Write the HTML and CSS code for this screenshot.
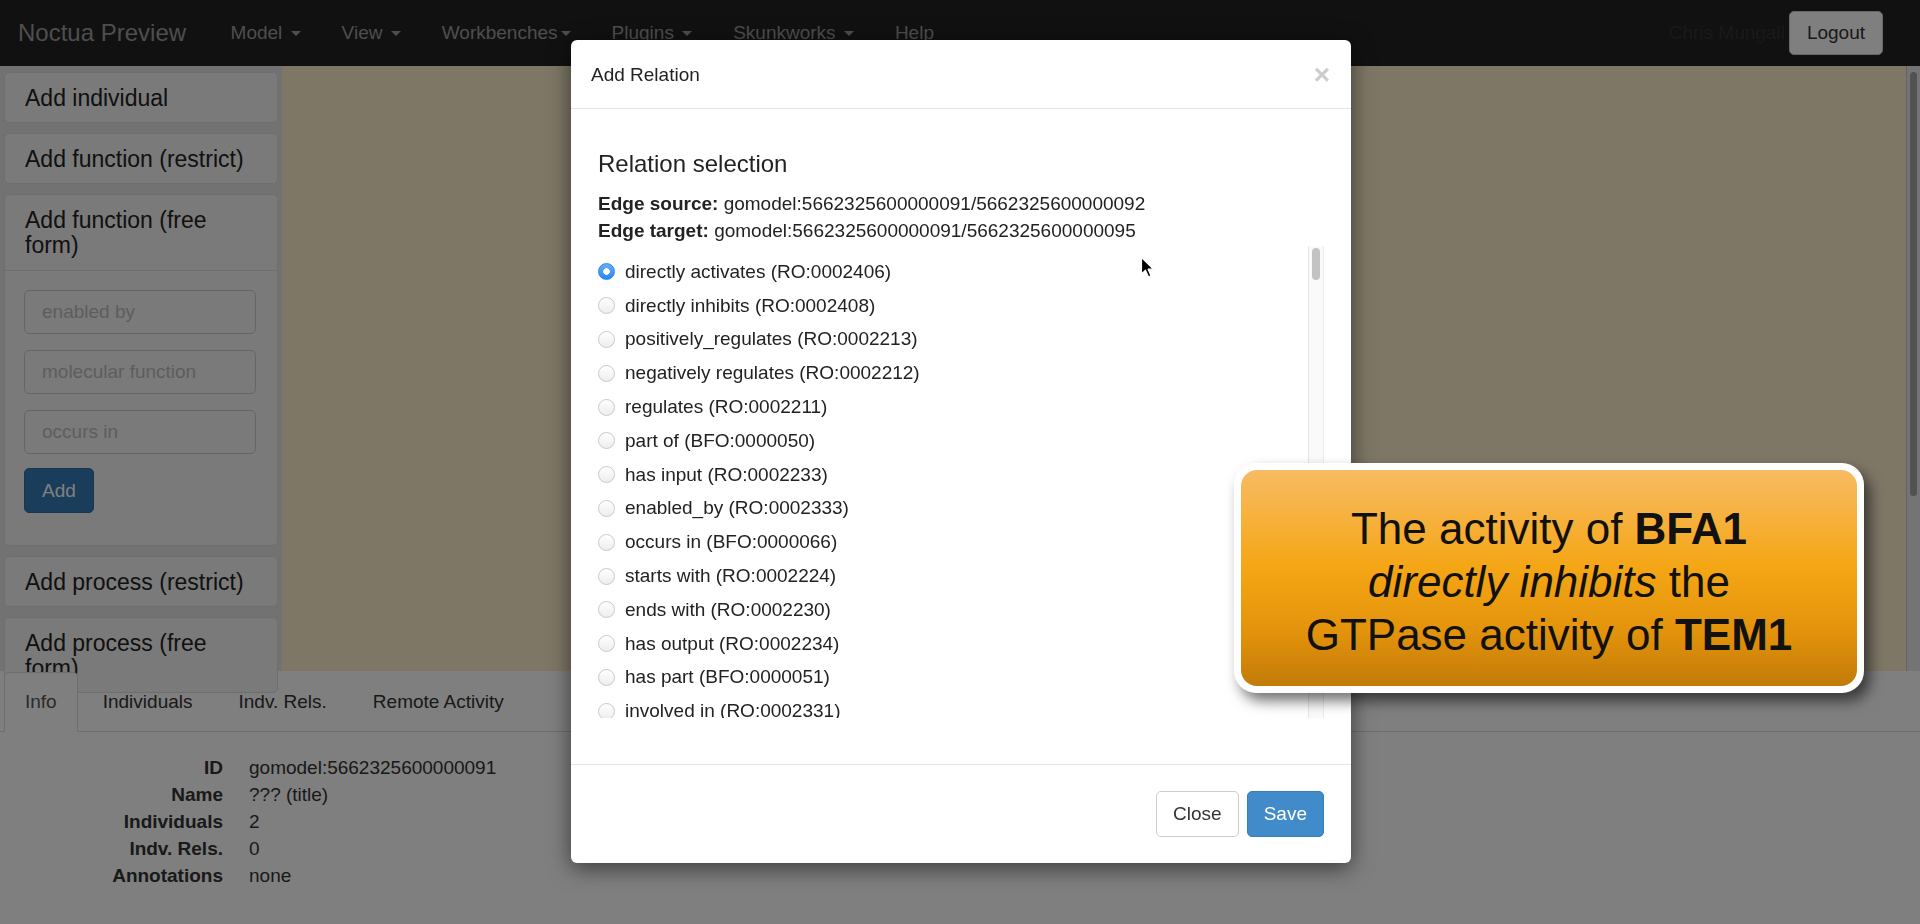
FILE: index.html
```html
<!DOCTYPE html>
<html lang="en">
    <head>
        <meta charset="UTF-8">
        <meta name="viewport" content="width=device-width, initial-scale=1.0">
        <title>Noctua Preview</title>
        <link rel="stylesheet" href="styles.css">
    </head>
    <body>
        <nav class="navbar">
            <span class="brand">Noctua Preview</span>
            <ul class="nav-links">
                <li>Model <span class="caret"></span></li>
                <li>View <span class="caret"></span></li>
                <li>Workbenches<span class="caret"></span></li>
                <li>Plugins <span class="caret"></span></li>
                <li>Skunkworks <span class="caret"></span></li>
                <li>Help</li>
            </ul>
            <div class="nav-right">
                <span class="user">Chris Mungall</span>
                <button class="btn-logout">Logout</button>
            </div>
        </nav>

        <div class="workspace">
            <aside class="sidebar">
                <div class="panel"><div class="panel-heading">Add individual</div></div>
                <div class="panel"><div class="panel-heading">Add function (restrict)</div></div>
                <div class="panel">
                    <div class="panel-heading open">Add function (free form)</div>
                    <div class="panel-body">
                        <input class="field" type="text" placeholder="enabled by">
                        <input class="field" type="text" placeholder="molecular function">
                        <input class="field" type="text" placeholder="occurs in">
                        <button class="btn-add">Add</button>
                    </div>
                </div>
                <div class="panel"><div class="panel-heading">Add process (restrict)</div></div>
                <div class="panel"><div class="panel-heading">Add process (free form)</div></div>
            </aside>
            <div class="canvas"></div>
            <div class="page-scroll"><div class="page-thumb"></div></div>
        </div>

        <div class="bottom">
            <ul class="tabs">
                <li class="tab active">Info</li>
                <li class="tab">Individuals</li>
                <li class="tab">Indv. Rels.</li>
                <li class="tab">Remote Activity</li>
            </ul>
            <dl class="info">
                <dt>ID</dt><dd>gomodel:5662325600000091</dd>
                <dt>Name</dt><dd>??? (title)</dd>
                <dt>Individuals</dt><dd>2</dd>
                <dt>Indv. Rels.</dt><dd>0</dd>
                <dt>Annotations</dt><dd>none</dd>
            </dl>
        </div>

        <div class="backdrop"></div>

        <div class="modal">
            <div class="modal-header">
                <span class="modal-title">Add Relation</span>
                <span class="close">&times;</span>
            </div>
            <div class="modal-body">
                <h4 class="section-title">Relation selection</h4>
                <div class="edge"><b>Edge source:</b> gomodel:5662325600000091/5662325600000092</div>
                <div class="edge"><b>Edge target:</b> gomodel:5662325600000091/5662325600000095</div>
                <div class="rel-box">
                    <div class="rel-list">
                        <label class="rel"><input type="radio" name="rel" checked> directly activates (RO:0002406)</label>
                        <label class="rel"><input type="radio" name="rel"> directly inhibits (RO:0002408)</label>
                        <label class="rel"><input type="radio" name="rel"> positively_regulates (RO:0002213)</label>
                        <label class="rel"><input type="radio" name="rel"> negatively regulates (RO:0002212)</label>
                        <label class="rel"><input type="radio" name="rel"> regulates (RO:0002211)</label>
                        <label class="rel"><input type="radio" name="rel"> part of (BFO:0000050)</label>
                        <label class="rel"><input type="radio" name="rel"> has input (RO:0002233)</label>
                        <label class="rel"><input type="radio" name="rel"> enabled_by (RO:0002333)</label>
                        <label class="rel"><input type="radio" name="rel"> occurs in (BFO:0000066)</label>
                        <label class="rel"><input type="radio" name="rel"> starts with (RO:0002224)</label>
                        <label class="rel"><input type="radio" name="rel"> ends with (RO:0002230)</label>
                        <label class="rel"><input type="radio" name="rel"> has output (RO:0002234)</label>
                        <label class="rel"><input type="radio" name="rel"> has part (BFO:0000051)</label>
                        <label class="rel"><input type="radio" name="rel"> involved in (RO:0002331)</label>
                        <label class="rel"><input type="radio" name="rel"> acts upstream of (RO:0002263)</label>
                    </div>
                    <div class="rel-scroll"><div class="rel-thumb"></div></div>
                </div>
            </div>
            <div class="modal-footer">
                <button class="btn btn-close">Close</button>
                <button class="btn btn-save">Save</button>
            </div>
        </div>

        <div class="callout">
            <div class="callout-inner">
                <p class="callout-text">
                    The activity of <b>BFA1</b><br>
                    <i>directly inhibits</i> the<br>
                    GTPase activity of <b>TEM1</b>
                </p>
            </div>
        </div>

        <svg class="cursor" width="16" height="24" viewBox="0 0 16 24">
            <path d="M1.5 1.5 L1.5 18 L5.5 14.2 L8.4 20.8 L11 19.7 L8.1 13.2 L13.5 13.2 Z" fill="#000" stroke="#fff" stroke-width="1.2" stroke-linejoin="round"/>
        </svg>
    </body>
</html>
```

FILE: styles.css
```css
*{
    margin: 0;
    padding: 0;
    box-sizing: border-box;
}
body{
    width: 1920px;
    height: 924px;
    overflow: hidden;
    background-color: white;
    font-family: "Liberation Sans", Arial, Helvetica, sans-serif;
    font-size: 19px;
    color: #333;
}
ul{
    list-style: none;
}

/* top bar */
.navbar{
    height: 66px;
    background-color: #222;
    display: flex;
    align-items: center;
    padding: 0 37px 0 18px;
}
.brand{
    font-size: 24px;
    color: #9d9d9d;
    padding-right: 24px;
}
.nav-links{
    display: flex;
}
.nav-links li{
    padding: 0 20.5px;
    color: #9d9d9d;
}
.caret{
    display: inline-block;
    width: 0;
    height: 0;
    margin-left: 3px;
    vertical-align: middle;
    border-top: 5px solid #9d9d9d;
    border-left: 5px solid transparent;
    border-right: 5px solid transparent;
}
.nav-right{
    margin-left: auto;
    display: flex;
    align-items: center;
    gap: 4px;
}
.user{
    color: #333;
}
.btn-logout{
    height: 44px;
    padding: 0 17px;
    font-family: inherit;
    font-size: 19px;
    color: #333;
    background-color: #fff;
    border: 1px solid #ccc;
    border-radius: 5px;
}

/* workspace */
.workspace{
    height: 605px;
    display: flex;
}
.sidebar{
    position: relative;
    z-index: 1;
    width: 282px;
    flex-shrink: 0;
    background-color: #e4e4e4;
    padding-top: 6px;
}
.panel{
    margin: 0 4px 10px 4px;
    background-color: #f5f5f5;
    border: 1px solid #ddd;
    border-radius: 5px;
}
.panel-heading{
    font-size: 23px;
    line-height: 25px;
    color: #222;
    padding: 13px 20px 11px 20px;
}
.panel-heading.open{
    padding-bottom: 12px;
    border-bottom: 1px solid #ddd;
}
.panel-body{
    display: flex;
    flex-direction: column;
    align-items: flex-start;
    gap: 16px;
    padding: 19px 21px 32px 19px;
}
.field{
    width: 100%;
    height: 44px;
    padding: 0 17px;
    font-family: inherit;
    font-size: 19px;
    background-color: #f5f5f5;
    border: 1px solid #ccc;
    border-radius: 5px;
}
.field::placeholder{
    color: #bbb;
}
.btn-add{
    margin-top: -2px;
    height: 45px;
    width: 70px;
    font-family: inherit;
    font-size: 19px;
    color: white;
    background-color: #337ab7;
    border: 1px solid #2e6da4;
    border-radius: 5px;
}
.canvas{
    flex: 1;
    background-color: #fdeecc;
}
.page-scroll{
    width: 14px;
    background-color: #e8e8e8;
    border-left: 1px solid #c8c8c8;
    padding: 6px 0 0 3px;
}
.page-thumb{
    width: 7px;
    height: 424px;
    border-radius: 4px;
    background-color: #a4a4a4;
}

/* bottom info */
.bottom{
    height: 253px;
}
.tabs{
    display: flex;
    padding: 1px 0 0 4px;
    border-bottom: 1px solid #ddd;
}
.tab{
    padding: 15px 20px 16px 20px;
    line-height: 27px;
    margin-right: 4px;
    margin-bottom: -1px;
    border: 1px solid transparent;
    color: #333;
}
.tab.active{
    position: relative;
    z-index: 2;
    background-color: white;
    border-color: #ddd #ddd transparent #ddd;
    border-radius: 5px 5px 0 0;
    color: #555;
}
.info{
    display: grid;
    grid-template-columns: 223px auto;
    column-gap: 26px;
    padding-top: 22px;
    line-height: 27px;
}
.info dt{
    text-align: right;
    font-weight: bold;
}

/* modal */
.backdrop{
    position: fixed;
    inset: 0;
    z-index: 10;
    background-color: rgba(0, 0, 0, .5);
}
.modal{
    position: absolute;
    z-index: 20;
    left: 571px;
    top: 40px;
    width: 780px;
    height: 823px;
    background-color: white;
    border-radius: 6px;
    box-shadow: 0 5px 22px rgba(0, 0, 0, .55);
    display: flex;
    flex-direction: column;
}
.modal-header{
    display: flex;
    align-items: center;
    justify-content: space-between;
    padding: 21px 21px 20px 20px;
    line-height: 27px;
    border-bottom: 1px solid #e5e5e5;
}
.modal-title{
    color: #222;
}
.close{
    font-size: 28px;
    font-weight: bold;
    color: #ccc;
}
.modal-body{
    flex: 1;
    padding: 20px 27px 0 27px;
}
.section-title{
    margin-top: 22px;
    margin-bottom: 13px;
    font-size: 24px;
    font-weight: normal;
    line-height: 26px;
    color: #222;
}
.edge{
    line-height: 27px;
    color: #222;
}
.rel-box{
    margin-top: 2px;
    height: 472px;
    display: flex;
}
.rel-list{
    flex: 1;
    overflow: hidden;
    padding-top: 9px;
    color: #222;
}
.rel{
    display: flex;
    align-items: center;
    height: 33.8px;
    gap: 10px;
}
.rel input{
    appearance: none;
    width: 17px;
    height: 17px;
    border-radius: 50%;
    border: 1px solid #c9c9c9;
    background: linear-gradient(#fff, #ededed);
    flex-shrink: 0;
}
.rel input:checked{
    border-color: #2f86e8;
    background: radial-gradient(circle, #fff 0 3px, transparent 3.5px), linear-gradient(#68adf7, #2a86f2);
}
.rel-scroll{
    width: 16px;
    background-color: #fafafa;
    border-left: 1px solid #e6e6e6;
    border-right: 1px solid #ececec;
    padding: 2px 0 0 3px;
}
.rel-thumb{
    width: 8px;
    height: 32px;
    border-radius: 4px;
    background-color: #c3c3c3;
}
.modal-footer{
    display: flex;
    justify-content: flex-end;
    gap: 8px;
    padding: 26px 27px;
    border-top: 1px solid #e5e5e5;
}
.btn{
    height: 46px;
    padding: 0 16px;
    font-family: inherit;
    font-size: 19px;
    border-radius: 5px;
}
.btn-close{
    color: #333;
    background-color: white;
    border: 1px solid #ccc;
}
.btn-save{
    color: white;
    background-color: #428bca;
    border: 1px solid #357ebd;
}

/* tutorial callout */
.callout{
    position: absolute;
    z-index: 30;
    left: 1234px;
    top: 463px;
    width: 630px;
    height: 230px;
    padding: 7px;
    background-color: white;
    border-radius: 22px;
    box-shadow: 6px 8px 14px rgba(0, 0, 0, .55);
}
.callout-inner{
    height: 100%;
    border-radius: 16px;
    background: linear-gradient(#f8bb63 0%, #f5a615 45%, #e3930b 75%, #c27b08 100%);
    display: flex;
    align-items: center;
    justify-content: center;
    padding-top: 6px;
}
.callout-text{
    text-align: center;
    font-size: 44px;
    line-height: 53px;
    color: #111;
}
.cursor{
    position: absolute;
    z-index: 40;
    left: 1140px;
    top: 256px;
}
```
